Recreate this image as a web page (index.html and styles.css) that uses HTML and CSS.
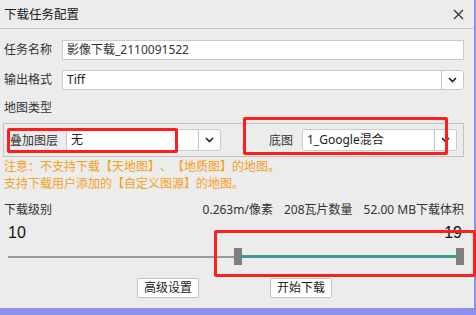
FILE: index.html
```html
<!DOCTYPE html>
<html>
<head>
<meta charset="utf-8">
<link rel="stylesheet" href="styles.css">
</head>
<body>
<div class="dialog">
  <div class="titlebar">
    <span class="title">下载任务配置</span>
    <svg class="close" width="11" height="11" viewBox="0 0 11 11"><path d="M1 1L10 10M10 1L1 10" stroke="#333" stroke-width="1.3" fill="none"/></svg>
  </div>
  <div class="content">
    <div class="row row1">
      <span class="label">任务名称</span>
      <div class="input">影像下载_2110091522</div>
    </div>
    <div class="row row2">
      <span class="label">输出格式</span>
      <div class="select wide">
        <span class="val">Tiff</span>
        <span class="arrow"><svg width="9" height="6" viewBox="0 0 9 6"><path d="M1 1L4.5 4.5L8 1" stroke="#222" stroke-width="1.6" fill="none"/></svg></span>
      </div>
    </div>
    <div class="section">地图类型</div>
    <div class="group">
      <div class="combo">
        <span class="glabel">叠加图层</span>
        <div class="select small">
          <span class="val">无</span>
          <span class="arrow"><svg width="9" height="6" viewBox="0 0 9 6"><path d="M1 1L4.5 4.5L8 1" stroke="#222" stroke-width="1.6" fill="none"/></svg></span>
        </div>
      </div>
      <div class="combo">
        <span class="glabel right">底图</span>
        <div class="select small">
          <span class="val">1_Google混合</span>
          <span class="arrow"><svg width="9" height="6" viewBox="0 0 9 6"><path d="M1 1L4.5 4.5L8 1" stroke="#222" stroke-width="1.6" fill="none"/></svg></span>
        </div>
      </div>
    </div>
    <div class="warn">注意：不支持下载【天地图】、【地质图】的地图。<br>支持下载用户添加的【自定义图源】的地图。</div>
    <div class="levelrow">
      <span>下载级别</span>
      <span class="stats"><span>0.263m/像素</span><span>208瓦片数量</span><span>52.00 MB下载体积</span></span>
    </div>
    <div class="nums"><span>10</span><span>19</span></div>
    <div class="slider">
      <div class="track gray"></div>
      <div class="handle"></div>
      <div class="track teal"></div>
      <div class="handle"></div>
    </div>
    <div class="buttons">
      <button class="btn">高级设置</button>
      <button class="btn">开始下载</button>
    </div>
  </div>
  <div class="mark m1"></div>
  <div class="mark m2"></div>
  <div class="mark m3"></div>
</div>
</body>
</html>
```
FILE: styles.css
```css
html, body {
  margin: 0;
  padding: 0;
}
body {
  width: 476px;
  height: 315px;
  background: #8f8ff0;
  overflow: hidden;
  font-family: "Noto Sans", "Noto Sans CJK SC", sans-serif;
  font-size: 12px;
  color: #333;
  text-spacing-trim: space-all;
}
.dialog {
  position: relative;
  width: 474px;
  height: 308px;
  background: #ececec;
}
.titlebar {
  height: 28px;
  border-bottom: 1px solid #c6c6c6;
  display: flex;
  align-items: center;
  justify-content: space-between;
  padding: 0 10px 0 4px;
  box-sizing: content-box;
}
.title {
  font-size: 12.5px;
  color: #222;
  line-height: 28px;
  padding-top: 1px;
}
.close {
  margin-top: 1px;
}
.content {
  padding: 0 10px 0 4px;
}
.row {
  display: flex;
  align-items: center;
  height: 20px;
}
.row1 { margin-top: 11px; }
.row2 { margin-top: 10px; }
.label {
  width: 58px;
  line-height: 20px;
  color: #333;
}
.input {
  flex: 1;
  height: 20px;
  box-sizing: border-box;
  border: 1px solid #cacaca;
  background: #fff;
  padding-left: 4px;
  line-height: 18px;
  color: #333;
}
.select {
  display: flex;
  background: #fff;
  border: 1px solid #cacaca;
  border-radius: 3px;
  box-sizing: border-box;
}
.select .val {
  flex: 1;
  padding-left: 4px;
  color: #222;
}
.select .arrow {
  width: 21px;
  border-left: 1px solid #c4c4c4;
  display: flex;
  align-items: center;
  justify-content: center;
}
.wide {
  flex: 1;
  height: 20px;
  line-height: 18px;
}
.section {
  margin-top: 10px;
  line-height: 16px;
  color: #333;
}
.group {
  margin: 7px 0 0 -1px;
  height: 34px;
  box-sizing: border-box;
  border: 1px solid #c2c2c2;
  display: flex;
  align-items: center;
  justify-content: space-between;
  padding: 0 6px;
}
.combo {
  display: flex;
  align-items: center;
}
.glabel {
  width: 56px;
  color: #333;
}
.glabel.right {
  width: auto;
  margin-right: 9px;
}
.small {
  width: 155px;
  height: 22px;
  line-height: 20px;
}
.warn {
  margin-top: 1px;
  line-height: 17px;
  color: #f5a020;
}
.levelrow {
  margin-top: 10px;
  display: flex;
  justify-content: space-between;
  line-height: 16px;
  color: #333;
}
.stats {
  display: flex;
  gap: 11px;
}
.nums {
  margin-top: 6px;
  display: flex;
  justify-content: space-between;
  padding: 0 2px 0 4px;
  font-family: "Liberation Sans", sans-serif;
  font-size: 16px;
  line-height: 18px;
  color: #111;
}
.slider {
  margin-top: 6px;
  height: 17px;
  display: flex;
  align-items: center;
  padding-left: 4px;
}
.track.gray {
  width: 226px;
  height: 2px;
  background: #9a9a9a;
}
.track.teal {
  width: 214px;
  height: 3px;
  background: #3a9c98;
}
.handle {
  width: 8px;
  height: 17px;
  background: #808080;
}
.buttons {
  margin-top: 13px;
  display: flex;
  gap: 71px;
  padding-left: 133px;
}
.btn {
  width: 62px;
  height: 20px;
  padding: 0;
  background: #fff;
  border: 1px solid #c4c4c4;
  border-radius: 2px;
  font-family: "Noto Sans", "Noto Sans CJK SC", sans-serif;
  font-size: 12px;
  line-height: 18px;
  color: #222;
}
.mark {
  position: absolute;
  border: 3px solid #ff1e1e;
  border-radius: 2px;
  box-sizing: border-box;
}
.m1 { left: 7px; top: 128px; width: 171px; height: 25px; }
.m2 { left: 243px; top: 117px; width: 205px; height: 38px; }
.m3 { left: 214px; top: 230px; width: 262px; height: 47px; }
```
